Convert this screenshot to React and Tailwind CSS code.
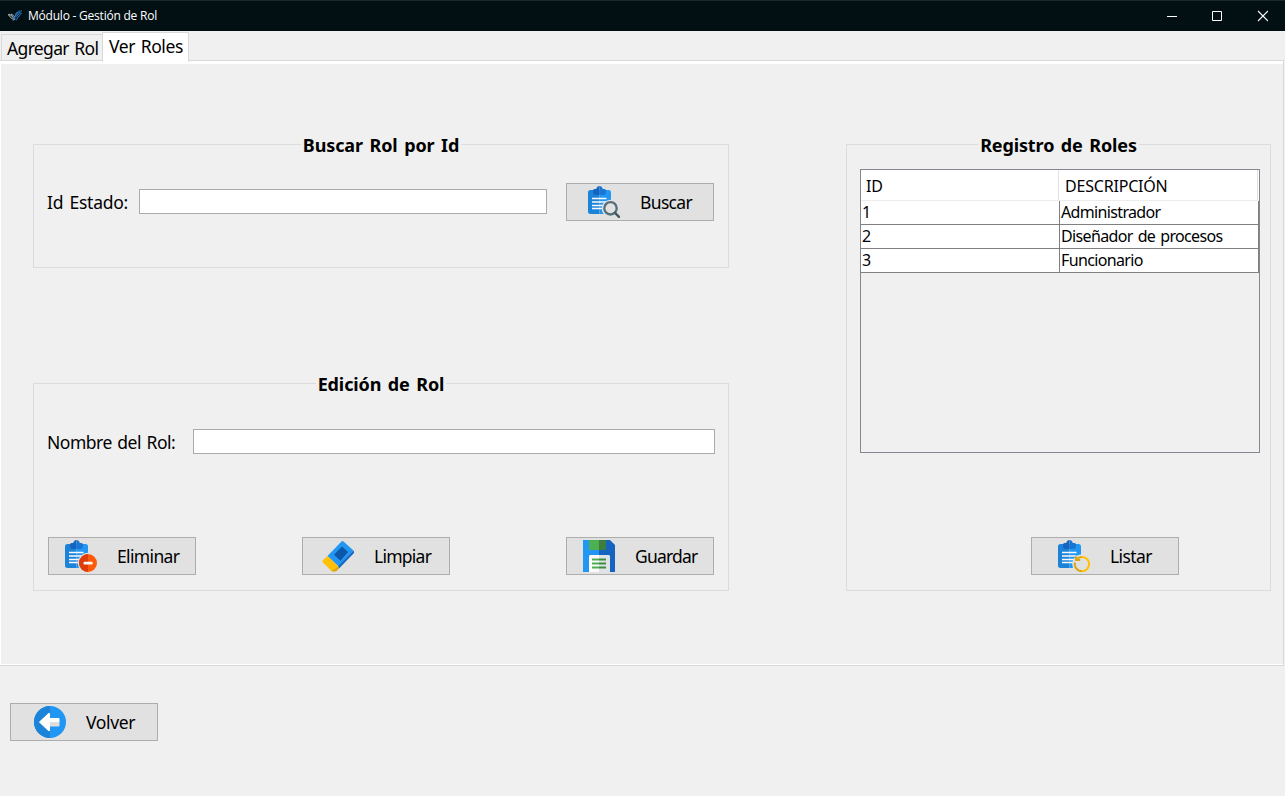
import React from "react";

function ClipboardBase() {
  return (
    <>
      <path d="M2.5 4H11.5V28H2.5A2.5 2.5 0 0 1 0 25.5V6.5A2.5 2.5 0 0 1 2.5 4Z" fill="#1c84d8" />
      <path d="M11.5 4H20.5A2.5 2.5 0 0 1 23 6.5V28H11.5Z" fill="#2196f3" />
      <path d="M11.5 0Q9 0 8.2 3H6.500Q5 3 5 4.500V6Q5 9 8 9H11.500Z" fill="#1565c0" />
      <path d="M11.500 0Q14 0 14.800 3H16.500Q18 3 18 4.500V6Q18 9 15 9H11.500Z" fill="#1976d2" />
      <path d="M4 12.500H18.500M4 16H18.500M4 19.500H18.500M4 22.500H18.500" stroke="#fafafa" strokeWidth="1.500" />
    </>
  );
}

function SearchIcon() {
  return (
    <svg className="block size-8" viewBox="0 0 32 32">
      <ClipboardBase />
      <circle cx="22.500" cy="22.500" r="8.800" fill="#e1e1e1" />
      <circle cx="22.500" cy="22.300" r="6.200" fill="none" stroke="#546e7a" strokeWidth="2.300" />
      <path d="M27 26.800L31 30.800" stroke="#455a64" strokeWidth="2.500" strokeLinecap="round" />
    </svg>
  );
}

function RemoveIcon() {
  return (
    <svg className="block size-8" viewBox="0 0 32 32">
      <ClipboardBase />
      <circle cx="23" cy="23" r="10.200" fill="#e1e1e1" />
      <circle cx="23" cy="23" r="9" fill="#ff5a0a" />
      <path d="M23 14A9 9 0 0 0 23 32Z" fill="#dd3d0b" />
      <rect x="18.500" y="21.700" width="9.200" height="2.700" rx="1" fill="#fafafa" />
    </svg>
  );
}

function RefreshIcon() {
  return (
    <svg className="block size-8" viewBox="0 0 32 32">
      <ClipboardBase />
      <circle cx="24" cy="24" r="9.800" fill="#e1e1e1" />
      <path d="M24 17A7.100 7.100 0 0 1 24 31.200" fill="none" stroke="#ffc107" strokeWidth="2" />
      <path d="M24 31.200A7.100 7.100 0 0 1 17 22.500M19.500 18.500Q21.500 17 24 17" fill="none" stroke="#dda60a" strokeWidth="2" />
      <path d="M17 15.800V21H22.200V19.200L19.800 18.500L18.500 16.500Z" fill="#dda60a" />
    </svg>
  );
}

function EraserIcon() {
  return (
    <svg className="block size-8" viewBox="0 0 32 32">
      <path d="M5.500 16L19.500 1.500Q20.500 .700 21.500 1.500L31.500 10.500L16.500 26.500Z" fill="#2196f3" />
      <path d="M31.500 10.500Q32.500 12 31.500 13.500L17 28.500L16 26.500Z" fill="#1565c0" />
      <path d="M5.500 16L16.500 26.500L12 30.500H9L.500 22V20.500Z" fill="#ffc107" />
      <path d="M16 26.500L17 28.500L14.500 31Q11.500 32.500 8.500 30.500L11.500 30Z" fill="#dda60a" />
      <path d="M20 6.500L26 12L18.500 20.700L12 14.800Z" fill="#0d57a8" />
    </svg>
  );
}

function SaveIcon() {
  return (
    <svg className="block size-8" viewBox="0 0 32 32">
      <path d="M0 0H16V32H0Z" fill="#2196f3" />
      <path d="M16 0H27L32 5V32H16Z" fill="#1565c0" />
      <path d="M6 0H16V10H6Z" fill="#4caf50" />
      <path d="M16 0H23V10H16Z" fill="#3d7d40" />
      <path d="M7 15H16V32H6V16Z" fill="#fafafa" />
      <path d="M16 15H26L27 16V32H16Z" fill="#dfe3e6" />
      <path d="M9 19.500H16M9 23.500H16M9 27.500H16" stroke="#4caf50" strokeWidth="2" />
      <path d="M16 19.500H23M16 23.500H23M16 27.500H23" stroke="#3d8d40" strokeWidth="2" />
    </svg>
  );
}

function BackIcon() {
  return (
    <svg className="block size-8" viewBox="0 0 32 32">
      <circle cx="16" cy="16" r="16" fill="#2196f3" />
      <path d="M16 0A16 16 0 0 0 16 32Z" fill="#1c84d8" />
      <path d="M5 16L14.800 6.800L16 7.500V12H24.500Q25.500 12 25.500 13V16Z" fill="#ffffff" />
      <path d="M5 16L14.800 25.200L16 24.500V20.500H24.500Q25.500 20.500 25.500 19.500V16Z" fill="#dedede" />
      <path d="M5 16L14.800 25.200L16 24.500V16Z" fill="#ffffff" />
    </svg>
  );
}

function Button({ icon, label, className }) {
  return (
    <button className={"flex h-[38px] w-[148px] shrink-0 items-center gap-[20px] border border-[#adadad] bg-[#e1e1e1] " + className}>
      {icon}
      <span className="text-[17.5px] leading-6 whitespace-nowrap">{label}</span>
    </button>
  );
}

function Panel({ title, className, children }) {
  return (
    <section className={"flex flex-col border border-[#dcdcdc] " + className}>
      <h2 className="-mt-[12px] h-6 shrink-0 self-center bg-[#f0f0f0] px-[2px] text-[18px] leading-6 font-bold tracking-[-0.12px] whitespace-nowrap [word-spacing:2px]">
        {title}
      </h2>
      {children}
    </section>
  );
}

const roles = [
  ["1", "Administrador"],
  ["2", "Diseñador de procesos"],
  ["3", "Funcionario"],
];

function RolesTable() {
  return (
    <div className="mt-[12px] ml-[13px] h-[284px] w-[400px] shrink-0 border border-[#828790] text-[16px] tracking-[-0.65px] [word-spacing:1.500px]">
      <div className="flex h-[31px] border-b border-[#ececec] bg-white leading-[33px]">
        <div className="w-[198px] border-r border-[#e2e2e2] pl-[5px] tracking-[-0.2px]">ID</div>
        <div className="w-[199px] border-r border-[#e2e2e2] pl-[6px] tracking-[-0.2px]">DESCRIPCIÓN</div>
      </div>
      {roles.map(([id, name]) => (
        <div key={id} className="flex h-6 bg-white leading-[22px]">
          <div className="w-[199px] border-r border-b border-[#808080] pl-px">{id}</div>
          <div className="w-[199px] border-r border-b border-[#808080] pl-px">{name}</div>
        </div>
      ))}
    </div>
  );
}

function TitleBar() {
  return (
    <header className="flex h-[31px] shrink-0 items-center border-t border-[#1b272b] bg-[#020f13] text-white">
      <svg className="ml-[8px] h-[12px] w-[14px]" viewBox="0 0 14 12">
        <path d="M0 4.500L6 10.500M1.500 4L7.500 10M3.500 4L7 7.500" stroke="#d5dde2" strokeWidth="1.100" strokeDasharray="1.100 .6" />
        <path d="M13.500 .5L5 10.500M11.500 .5L6 7.500M9.500 2L7 5M13.500 3L8 10" stroke="#2f7fd0" strokeWidth="1.100" strokeDasharray="1.500 .4" />
      </svg>
      <h1 className="ml-[6px] grow font-['Open_Sans',sans-serif] text-[12px] leading-4 tracking-[-0.22px]">Módulo - Gestión de Rol</h1>
      <svg className="mr-[17px] h-[12px] w-[102px]" viewBox="0 0 102 12" fill="none" stroke="#fff">
        <path d="M1 6.500H11" />
        <path d="M46.500 1.500H55.500V10.500H46.500Z" />
        <path d="M92 1L102 11M102 1L92 11" strokeWidth="1.100" />
      </svg>
    </header>
  );
}

export default function App() {
  return (
    <div className="flex h-[796px] w-[1285px] flex-col overflow-hidden bg-[#f0f0f0] font-['Noto_Sans','DejaVu_Sans',sans-serif] text-black">
      <TitleBar />
      <nav className="z-10 flex h-[31px] shrink-0 items-end text-[17.5px] whitespace-nowrap [word-spacing:1.500px]">
        <div className="mb-px ml-px flex h-[27px] w-[101px] items-center border border-r-0 border-[#d9d9d9] pt-px pl-[5px] tracking-[-0.65px]">Agregar Rol</div>
        <div className="flex h-[30px] w-[87px] items-center border border-b-0 border-[#d9d9d9] bg-white pb-[2px] pl-[6px] tracking-[-0.4px]">Ver Roles</div>
      </nav>
      <main className="-mt-[2px] mr-px flex h-[606px] shrink-0 border-y border-r border-[#d9d9d9]">
        <div className="flex grow border-t-[3px] border-b border-l border-white pt-[80px] pl-[32px]">
          <div className="flex w-[696px] shrink-0 flex-col gap-[115px]">
            <Panel title="Buscar Rol por Id" className="h-[124px]">
              <div className="mt-[26px] flex items-center pl-[13px]">
                <label className="w-[92px] text-[17.5px] leading-6 tracking-[-0.25px] whitespace-nowrap [word-spacing:2px]">Id Estado:</label>
                <input className="mb-px h-[25px] w-[408px] border border-[#ababab] bg-white" />
                <Button icon={<SearchIcon />} label="Buscar" className="ml-[19px] pl-[21px] tracking-[-0.65px]" />
              </div>
            </Panel>
            <Panel title="Edición de Rol" className="h-[208px]">
              <div className="mt-[33px] flex items-center pl-[13px]">
                <label className="w-[146px] text-[17.5px] leading-6 tracking-[-0.5px] whitespace-nowrap [word-spacing:1.500px]">Nombre del Rol:</label>
                <input className="h-[25px] w-[522px] border border-[#ababab] bg-white" />
              </div>
              <div className="mt-[83px] flex pl-[14px]">
                <Button icon={<RemoveIcon />} label="Eliminar" className="pl-[16px] tracking-[-0.65px]" />
                <Button icon={<EraserIcon />} label="Limpiar" className="ml-[106px] pl-[19px] tracking-[-0.75px]" />
                <Button icon={<SaveIcon />} label="Guardar" className="ml-[116px] pl-[16px] tracking-[-0.8px]" />
              </div>
            </Panel>
          </div>
          <Panel title="Registro de Roles" className="ml-[117px] h-[447px] w-[425px] shrink-0">
            <RolesTable />
            <Button icon={<RefreshIcon />} label="Listar" className="mt-[84px] ml-[184px] pl-[26px] tracking-[-0.6px]" />
          </Panel>
        </div>
      </main>
      <footer className="pt-[37px] pl-[10px]">
        <Button icon={<BackIcon />} label="Volver" className="pl-[23px] tracking-[-0.35px]" />
      </footer>
    </div>
  );
}
